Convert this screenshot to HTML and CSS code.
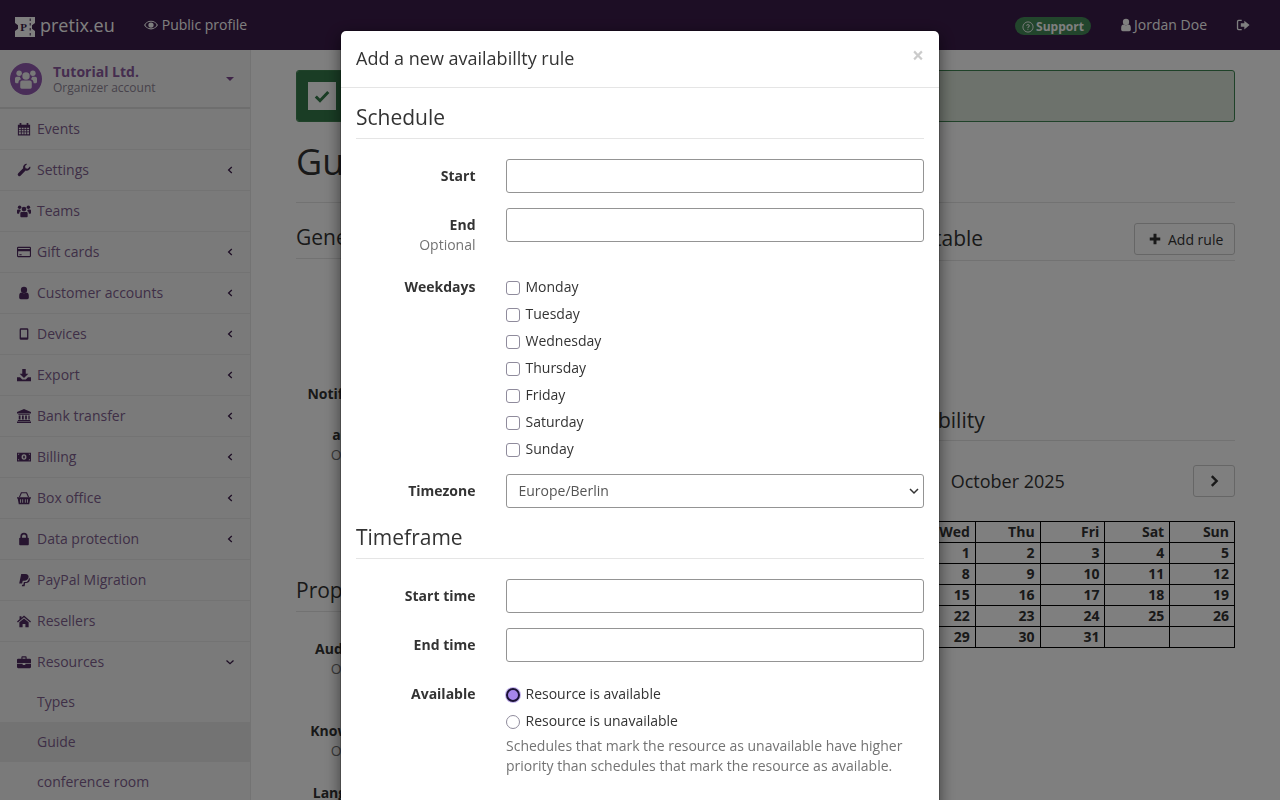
FILE: index.html
```html
<!DOCTYPE html>
<html lang="en">
<head>
<meta charset="utf-8">
<title>Guide :: Resources :: pretix.eu</title>
<link rel="stylesheet" href="styles.css">
</head>
<body>
<svg class="sprite" aria-hidden="true">
  <symbol id="i-calendar" viewBox="0 0 16 16"><path fill-rule="evenodd" d="M1 3h2V1h2v2h6V1h2v2h2v12.5H1zM2.2 6.5v1.7h2.2V6.5zM5.4 6.5v1.7h2.1V6.5zM8.5 6.5v1.7h2.1V6.5zM11.6 6.5v1.7h2.2V6.5zM2.2 9.1v1.8h2.2V9.1zM5.4 9.1v1.8h2.1V9.1zM8.5 9.1v1.8h2.1V9.1zM11.6 9.1v1.8h2.2V9.1zM2.2 11.8v2.2h2.2v-2.2zM5.4 11.8v2.2h2.1v-2.2zM8.5 11.8v2.2h2.1v-2.2zM11.6 11.8v2.2h2.2v-2.2z"/></symbol>
  <symbol id="i-wrench" viewBox="0 0 16 16"><path d="M15.4 4.6a4.2 4.2 0 0 1-5.6 4L4.3 14.400a2 2 0 0 1-2.9-2.800L7 6.100A4.200 4.200 0 0 1 11.600 1L9.200 3.500l.5 2.600 2.600.5 2.500-2.500z"/></symbol>
  <symbol id="i-group" viewBox="0 0 16 16"><circle cx="8" cy="5.800" r="2.700"/><circle cx="3" cy="3.800" r="2"/><circle cx="13" cy="3.800" r="2"/><path d="M3.800 10.500Q3.800 9 5.200 9h5.600q1.400 0 1.400 1.500V14q0 1-1 1H4.800q-1 0-1-1zM0 7.500Q0 6.300 1.300 6.300h2.200q.2 1 1 1.800-2 .4-2.100 2.900H.8Q0 11 0 10zM16 7.500q0-1.200-1.300-1.200h-2.200q-.2 1-1 1.800 2 .4 2.100 2.900h1.600q.8 0 .8-1z"/></symbol>
  <symbol id="i-card" viewBox="0 0 16 16"><path fill-rule="evenodd" d="M1.300 2h13.400Q16 2 16 3.300v9.400Q16 14 14.700 14H1.300Q0 14 0 12.700V3.300Q0 2 1.300 2zM1.300 7v5.700h13.400V7zM1.300 3.300v1.400h13.400V3.300zM2.700 10.500h2.600v1.100H2.700z"/></symbol>
  <symbol id="i-user" viewBox="0 0 16 16"><circle cx="8" cy="4.500" r="3.600"/><path d="M2.500 13.300V11c0-2.400 1.200-3.600 2.800-3.600 1.300 1 4.100 1 5.400 0 1.600 0 2.800 1.200 2.800 3.600v2.300q0 1.700-1.700 1.700H4.200q-1.700 0-1.700-1.700z"/></symbol>
  <symbol id="i-tablet" viewBox="0 0 16 16"><path fill-rule="evenodd" d="M4.500 1.500h7Q13 1.500 13 3v10q0 1.500-1.500 1.500h-7Q3 14.500 3 13V3q0-1.500 1.500-1.500zM4.500 3v9h7V3z"/></symbol>
  <symbol id="i-download" viewBox="0 0 16 16"><path d="M6 1h4v5.500h3L8 11.500 3 6.500h3zM0 10.500h3.500l2.500 2.500h4l2.500-2.500H16V15H0z"/></symbol>
  <symbol id="i-bank" viewBox="0 0 16 16"><path d="M8 0l8 3.500v1.500H0V3.500zM1.500 5.800h13v.9h-13zM2 7.400h2V12H2zM5.700 7.400h2V12h-2zM9.300 7.400h2V12h-2zM13 7.400h1.500V12H13zM1 12.600h14v1.200H1zM0 14.300h16V16H0z"/></symbol>
  <symbol id="i-money" viewBox="0 0 16 16"><path fill-rule="evenodd" d="M0 3h16v10H0zM1.300 4.300v1.500a2 2 0 0 0 1.500-1.500zM13.200 4.300a2 2 0 0 0 1.500 1.500V4.300zM1.300 10.200v1.500h1.500a2 2 0 0 0-1.500-1.500zM14.700 10.200a2 2 0 0 0-1.500 1.500h1.500zM8 4.800a2.800 3.200 0 1 0 0 6.400 2.800 3.200 0 0 0 0-6.400zM8 6.200a1 1.800 0 1 1 0 3.600 1 1.800 0 0 1 0-3.600z"/></symbol>
  <symbol id="i-basket" viewBox="0 0 16 16"><path fill-rule="evenodd" d="M0 7h16v1.600h-.8L14 15H2L.8 8.600H0zM3.600 9.500v4h1v-4zM6 9.500v4h1v-4zM9 9.500v4h1v-4zM11.400 9.500v4h1v-4z"/><path d="M2.800 7 5 2h6l2.200 5" fill="none" stroke="currentColor" stroke-width="1.300"/></symbol>
  <symbol id="i-lock" viewBox="0 0 16 16"><path d="M2.500 7.500Q2.500 6.500 3.500 6.500h9q1 0 1 1V14q0 1-1 1h-9q-1 0-1-1z"/><path d="M4.800 7V5a3.200 3.200 0 0 1 6.400 0v2" fill="none" stroke="currentColor" stroke-width="1.900"/></symbol>
  <symbol id="i-paypal" viewBox="0 0 16 16"><path d="M4.800 1h4.700c2.800 0 4.200 1.500 3.700 3.800-.5 2.600-2.400 4-5 4H6.600L5.800 12H2.500z"/><path d="M13.800 5.300c.9.700 1.100 1.700.8 3-.5 2.100-2 3.200-4.200 3.200H9.300L8.700 15H5.500l.3-1.700h1.400l.7-3h1.500c2.300 0 3.800-1.400 4.400-5z"/></symbol>
  <symbol id="i-home" viewBox="0 0 16 16"><path d="M8 1.800l8 6.700-1 1.100-7-5.800-7 5.800-1-1.100 2.900-2.400V2.500h2.200v1.900zM8 5l5.300 4.400V15H9.600v-3.500H6.400V15H2.700V9.400z"/></symbol>
  <symbol id="i-briefcase" viewBox="0 0 16 16"><path fill-rule="evenodd" d="M1.300 4.200H5V2.500q0-1 1-1h4q1 0 1 1v1.700h3.700Q16 4.200 16 5.500V9H0V5.500Q0 4.200 1.300 4.200zM6.300 2.800v1.400h3.400V2.800z"/><path d="M0 10h6.500v1.500h3V10H16v3.700q0 1.300-1.300 1.300H1.300Q0 15 0 13.700z"/></symbol>
  <symbol id="i-left" viewBox="0 0 10 10"><path d="M6.800 2 3.600 5l3.200 3" fill="none" stroke="currentColor" stroke-width="1.300"/></symbol>
  <symbol id="i-down" viewBox="0 0 10 10"><path d="M1.500 3.500 5 6.700l3.500-3.200" fill="none" stroke="currentColor" stroke-width="1.300"/></symbol>
  <symbol id="i-right" viewBox="0 0 16 16"><path d="M5.500 2.500 11 8l-5.500 5.500" fill="none" stroke="currentColor" stroke-width="2.800"/></symbol>
  <symbol id="i-check" viewBox="0 0 16 16"><path d="M1.800 8.500 6 12.700l8.300-8.700" fill="none" stroke="currentColor" stroke-width="3"/></symbol>
  <symbol id="i-plus" viewBox="0 0 16 16"><path d="M6.300 2h3.400v4.300H14v3.400H9.700V14H6.300V9.700H2V6.300h4.300z"/></symbol>
  <symbol id="i-eye" viewBox="0 0 16 16"><path fill-rule="evenodd" d="M8 3c3.500 0 6.300 2.200 8 5-1.700 2.800-4.500 5-8 5s-6.300-2.200-8-5c1.700-2.800 4.500-5 8-5zM8 4.300A6.800 6.800 0 0 0 1.500 8 6.800 6.800 0 0 0 8 11.700 6.800 6.800 0 0 0 14.500 8 6.800 6.800 0 0 0 8 4.300zM8 5a3 3 0 1 1 0 6 3 3 0 0 1 0-6z"/></symbol>
  <symbol id="i-logout" viewBox="0 0 16 16"><path fill-rule="evenodd" d="M3 2h3.500v1.500H3.200q-.7 0-.7.700v7.600q0 .7.700.7h3.300V14H3q-2 0-2-2V4q0-2 2-2z"/><path d="M9.500 3 15.500 8l-6 5v-3H5.500V6h4z"/></symbol>
  <symbol id="i-help" viewBox="0 0 16 16"><circle cx="8" cy="8" r="6.800" fill="none" stroke="currentColor" stroke-width="1.200"/><path d="M5.600 6.300C5.700 4.900 6.700 4.200 8 4.200c1.400 0 2.400.8 2.400 2 0 1.900-1.900 1.700-1.900 3.200H7.200c0-2.200 1.800-2 1.800-3.200 0-.5-.4-.8-1-.8s-1 .4-1.100.9zM7.200 10.200h1.300v1.400H7.200z"/></symbol>
  <symbol id="i-select" viewBox="0 0 10 10"><path d="M1 3l4 4 4-4" fill="none" stroke="currentColor" stroke-width="1.500"/></symbol>
</svg>

<header class="topbar">
  <a class="brand">
    <svg class="logo" viewBox="0 0 20 20" aria-hidden="true">
      <path d="M0 0h20v6l-3 2.200v3.600l3 2.200v6H0v-6l3-2.200V8.200L0 6z" fill="currentColor"/>
      <path d="M15.200 1.500v2.500M15.200 6v2.500M15.200 11v2.500M15.200 16v2.500" class="logo-perf"/>
      <text x="8.500" y="14" class="logo-text">P</text>
    </svg>
    <span class="brand-name">pretix.eu</span>
  </a>
  <a class="top-link"><svg class="ico ico-eye"><use href="#i-eye"/></svg>Public profile</a>
  <div class="top-right">
    <a class="support"><svg class="ico ico-help"><use href="#i-help"/></svg>Support</a>
    <a class="top-link user"><svg class="ico ico-user"><use href="#i-user"/></svg>Jordan Doe</a>
    <a class="logout"><svg class="ico ico-logout"><use href="#i-logout"/></svg></a>
  </div>
</header>

<div class="page">
  <aside class="sidebar">
    <div class="org">
      <span class="avatar"><svg class="ico ico-avatar"><use href="#i-group"/></svg></span>
      <div class="org-text">
        <div class="org-name">Tutorial Ltd.</div>
        <div class="org-type">Organizer account</div>
      </div>
      <span class="caret"></span>
    </div>
    <nav>
      <a class="item"><svg class="ico"><use href="#i-calendar"/></svg><span class="label">Events</span></a>
      <a class="item"><svg class="ico"><use href="#i-wrench"/></svg><span class="label">Settings</span><svg class="chev"><use href="#i-left"/></svg></a>
      <a class="item"><svg class="ico"><use href="#i-group"/></svg><span class="label">Teams</span></a>
      <a class="item"><svg class="ico"><use href="#i-card"/></svg><span class="label">Gift cards</span><svg class="chev"><use href="#i-left"/></svg></a>
      <a class="item"><svg class="ico"><use href="#i-user"/></svg><span class="label">Customer accounts</span><svg class="chev"><use href="#i-left"/></svg></a>
      <a class="item"><svg class="ico"><use href="#i-tablet"/></svg><span class="label">Devices</span><svg class="chev"><use href="#i-left"/></svg></a>
      <a class="item"><svg class="ico"><use href="#i-download"/></svg><span class="label">Export</span><svg class="chev"><use href="#i-left"/></svg></a>
      <a class="item"><svg class="ico"><use href="#i-bank"/></svg><span class="label">Bank transfer</span><svg class="chev"><use href="#i-left"/></svg></a>
      <a class="item"><svg class="ico"><use href="#i-money"/></svg><span class="label">Billing</span><svg class="chev"><use href="#i-left"/></svg></a>
      <a class="item"><svg class="ico"><use href="#i-basket"/></svg><span class="label">Box office</span><svg class="chev"><use href="#i-left"/></svg></a>
      <a class="item"><svg class="ico"><use href="#i-lock"/></svg><span class="label">Data protection</span><svg class="chev"><use href="#i-left"/></svg></a>
      <a class="item"><svg class="ico"><use href="#i-paypal"/></svg><span class="label">PayPal Migration</span></a>
      <a class="item"><svg class="ico"><use href="#i-home"/></svg><span class="label">Resellers</span></a>
      <a class="item item-open"><svg class="ico"><use href="#i-briefcase"/></svg><span class="label">Resources</span><svg class="chev"><use href="#i-down"/></svg></a>
      <a class="sub">Types</a>
      <a class="sub sub-active">Guide</a>
      <a class="sub">conference room</a>
    </nav>
  </aside>

  <main class="content">
    <div class="alert">
      <span class="alert-side"><span class="alert-box"><svg class="ico ico-check"><use href="#i-check"/></svg></span></span>
      <span class="alert-msg"></span>
    </div>
    <h1 class="title">Guide</h1>
    <div class="columns">
      <section class="col">
        <h2 class="legend legend-general">General information</h2>
        <div class="field field-notif"><div class="name">Notified via</div></div>
        <div class="field field-address"><div class="name">address</div><div class="opt">Optional</div></div>
        <h2 class="legend legend-prop">Properties</h2>
        <div class="field field-aud"><div class="name">Audiences</div><div class="opt">Optional</div></div>
        <div class="field field-know"><div class="name">Knowledge</div><div class="opt">Optional</div></div>
        <div class="field field-lang"><div class="name">Languages</div></div>
      </section>
      <section class="col">
        <div class="legend legend-row">
          <h2 class="legend-text">Schedules timetable</h2>
          <a class="btn btn-add"><svg class="ico ico-plus"><use href="#i-plus"/></svg>Add rule</a>
        </div>
        <h2 class="legend legend-avail">Upcoming availability</h2>
        <div class="month">
          <a class="btn btn-nav"><svg class="ico ico-nav"><use href="#i-left"/></svg></a>
          <span class="month-name">October 2025</span>
          <a class="btn btn-nav"><svg class="ico ico-nav"><use href="#i-right"/></svg></a>
        </div>
        <table class="cal">
          <tr><th>Mon</th><th>Tue</th><th>Wed</th><th>Thu</th><th>Fri</th><th>Sat</th><th>Sun</th></tr>
          <tr><td></td><td></td><td>1</td><td>2</td><td>3</td><td>4</td><td>5</td></tr>
          <tr><td>6</td><td>7</td><td>8</td><td>9</td><td>10</td><td>11</td><td>12</td></tr>
          <tr><td>13</td><td>14</td><td>15</td><td>16</td><td>17</td><td>18</td><td>19</td></tr>
          <tr><td>20</td><td>21</td><td>22</td><td>23</td><td>24</td><td>25</td><td>26</td></tr>
          <tr><td>27</td><td>28</td><td>29</td><td>30</td><td>31</td><td></td><td></td></tr>
        </table>
      </section>
    </div>
  </main>
</div>

<div class="backdrop"></div>

<div class="modal">
  <div class="modal-head">
    <h4 class="modal-title">Add a new availabillty rule</h4>
    <button class="close" type="button">×</button>
  </div>
  <form class="modal-body">
    <div class="section-title">Schedule</div>
    <div class="row">
      <label class="row-label">Start</label>
      <div class="row-ctl"><input class="input" type="text"></div>
    </div>
    <div class="row">
      <label class="row-label">End<span class="optional">Optional</span></label>
      <div class="row-ctl"><input class="input" type="text"></div>
    </div>
    <div class="row">
      <label class="row-label">Weekdays</label>
      <div class="row-ctl checks">
        <label class="check"><input class="cb" type="checkbox">Monday</label>
        <label class="check"><input class="cb" type="checkbox">Tuesday</label>
        <label class="check"><input class="cb" type="checkbox">Wednesday</label>
        <label class="check"><input class="cb" type="checkbox">Thursday</label>
        <label class="check"><input class="cb" type="checkbox">Friday</label>
        <label class="check"><input class="cb" type="checkbox">Saturday</label>
        <label class="check check-last"><input class="cb" type="checkbox">Sunday</label>
      </div>
    </div>
    <div class="row">
      <label class="row-label">Timezone</label>
      <div class="row-ctl select-wrap">
        <select class="input select"><option>Europe/Berlin</option></select>
        <svg class="select-arrow"><use href="#i-select"/></svg>
      </div>
    </div>
    <div class="section-title">Timeframe</div>
    <div class="row">
      <label class="row-label">Start time</label>
      <div class="row-ctl"><input class="input" type="text"></div>
    </div>
    <div class="row">
      <label class="row-label">End time</label>
      <div class="row-ctl"><input class="input" type="text"></div>
    </div>
    <div class="row">
      <label class="row-label">Available</label>
      <div class="row-ctl checks">
        <label class="check"><input class="rb" type="radio" name="av" checked>Resource is available</label>
        <label class="check"><input class="rb" type="radio" name="av">Resource is unavailable</label>
        <div class="help">Schedules that mark the resource as unavailable have higher priority than schedules that mark the resource as available.</div>
      </div>
    </div>
  </form>
</div>
</body>
</html>
```

FILE: styles.css
```css
* { box-sizing: border-box; }
html, body { height: 800px; overflow: hidden; }
body {
  margin: 0;
  font-family: "Open Sans", "Liberation Sans", sans-serif;
  font-size: 14px;
  line-height: 20px;
  color: #333;
  background: #fff;
}
.sprite { display: none; }
.ico { width: 14px; height: 14px; fill: currentColor; flex: none; }

.topbar {
  height: 50px;
  background: #3b1c4a;
  color: #fff;
  display: flex;
  align-items: center;
}
.brand { display: flex; align-items: center; margin-left: 15px; }
.logo { width: 20px; height: 20px; margin-top: 4px; color: #fff; }
.logo-perf { stroke: #3b1c4a; stroke-width: 1; fill: none; }
.logo-text { font-family: "Liberation Serif", serif; font-size: 11px; font-weight: bold; text-anchor: middle; fill: #3b1c4a; }
.brand-name { font-size: 18px; margin-left: 5px; }
.top-link { display: flex; align-items: center; margin-left: 29px; }
.ico-eye { width: 14px; height: 14px; margin-right: 4px; }
.top-right { margin-left: auto; display: flex; align-items: center; }
.support {
  display: flex;
  align-items: center;
  height: 18px;
  width: 76px;
  padding: 1px 0 0 7px;
  border-radius: 9px;
  background: #448a58;
  font-size: 12px;
  font-weight: 700;
  margin-top: 2px;
}
.ico-help { width: 12px; height: 12px; margin-right: 2px; }
.user { margin-left: 32px; }
.ico-user { width: 14px; height: 14px; margin-right: 1.300px; margin-left: -4.300px; }
.logout { display: flex; margin-left: 29px; margin-right: 30px; }
.ico-logout { width: 14px; height: 14px; }

.page { display: flex; height: 750px; }
.sidebar {
  width: 251px;
  flex: none;
  background: #f5f5f5;
  border-right: 1px solid #e7e7e7;
  color: #7e5f8e;
}
.org {
  height: 59px;
  display: flex;
  align-items: center;
  padding: 0 16px 2px 10px;
  border-bottom: 2px solid #dcdcdc;
}
.avatar {
  width: 32px;
  height: 32px;
  border-radius: 50%;
  background: #925ab0;
  color: #f0f0f0;
  display: flex;
  align-items: center;
  justify-content: center;
  flex: none;
  margin-top: 2px;
}
.ico-avatar { width: 22px; height: 22px; }
.org-text { margin: 2px 0 0 11px; flex: 1; }
.org-name { font-weight: 700; line-height: 18px; color: #8a5a9e; }
.org-type { font-size: 12px; line-height: 14px; color: #8f8596; }
.caret {
  width: 0;
  height: 0;
  border-left: 4px solid transparent;
  border-right: 4px solid transparent;
  border-top: 4px solid #7f4a91;
  margin-top: 2px;
}
.item {
  height: 41px;
  display: flex;
  align-items: center;
  padding: 0 15px 1px 17px;
  border-bottom: 1px solid #e7e7e7;
}
.item .ico { color: #4f2a60; }
.label { margin-left: 6px; flex: 1; }
.chev { width: 10px; height: 10px; color: #3b1c4a; flex: none; }
.item-open { height: 40px; border-bottom: 0; }
.sub { display: block; height: 40px; padding: 10px 0 10px 37px; }
.sub-active { background: #e7e7e7; }

.content { flex: 1; padding: 20px 45px 0; min-width: 0; }
.alert {
  display: flex;
  height: 52px;
  border-radius: 3px;
  border: 1px solid #3f8552;
  background: #dbe5d8;
  overflow: hidden;
}
.alert-side {
  width: 52px;
  margin: -1px 0 -1px -1px;
  background: #347a4a;
  display: flex;
  align-items: center;
  justify-content: center;
}
.alert-box {
  width: 28px;
  height: 28px;
  background: #fff;
  color: #347a4a;
  display: flex;
  align-items: center;
  justify-content: center;
}
.ico-check { width: 16px; height: 16px; }
.title {
  font-size: 36px;
  font-weight: 400;
  line-height: 50px;
  margin: 15px 0 0;
  padding-bottom: 15px;
  border-bottom: 1px solid #e5e5e5;
}
.columns { display: flex; gap: 30px; }
.col { flex: 1 1 0; min-width: 0; }
.legend {
  font-size: 21px;
  font-weight: 400;
  line-height: 29px;
  margin: 0;
  padding-bottom: 6px;
  border-bottom: 1px solid #e5e5e5;
}
.legend-general { margin-top: 20px; }
.legend-prop { margin-top: 111px; }
.legend-row {
  display: flex;
  align-items: center;
  justify-content: space-between;
  margin-top: 20px;
  padding-bottom: 5px;
}
.legend-text { font-size: 21px; font-weight: 400; line-height: 29px; margin: -2px 0 0; word-spacing: 5px; }
.legend-avail { margin-top: 144px; line-height: 30px; padding-bottom: 5px; word-spacing: -4px; }
.field { width: 91px; text-align: right; }
.name { font-weight: 700; white-space: nowrap; }
.opt { color: #737373; }
.field-notif { margin-top: 125px; word-spacing: -2px; }
.field-address { margin-top: 21px; }
.field-aud { margin-top: 27px; }
.field-know { margin-top: 42px; }
.field-lang { margin-top: 22px; }
.btn {
  display: inline-flex;
  align-items: center;
  justify-content: center;
  height: 32px;
  border: 1px solid #ccc;
  border-radius: 3px;
  background: #fff;
  font-size: 14px;
  white-space: nowrap;
}
.btn-add { width: 101px; justify-content: flex-start; padding-left: 13px; }
.ico-plus { width: 14px; height: 14px; margin-right: 6px; }
.btn-nav { width: 42px; }
.ico-nav { width: 14px; height: 14px; margin-left: -1px; }
.month {
  display: flex;
  align-items: center;
  justify-content: space-between;
  margin-top: 24px;
}
.month-name { font-size: 18px; }
.cal {
  width: 100%;
  margin-top: 24px;
  border-collapse: collapse;
  table-layout: fixed;
  font-weight: 700;
}
.cal th, .cal td {
  border: 1px solid #000;
  height: 21px;
  padding: 0 5px;
  text-align: right;
  line-height: 20px;
}

.backdrop {
  position: fixed;
  inset: 0;
  background: rgba(0, 0, 0, .5);
}
.modal {
  position: fixed;
  top: 30px;
  left: 340px;
  width: 600px;
  background: #fff;
  border: 1px solid rgba(0, 0, 0, .2);
  border-radius: 6px;
  background-clip: padding-box;
  box-shadow: 0 5px 15px rgba(0, 0, 0, .5);
}
.modal-head {
  position: relative;
  height: 57px;
  padding: 15px;
  border-bottom: 1px solid #e5e5e5;
}
.modal-title { margin: 0; font-size: 18px; font-weight: 400; line-height: 25px; }
.close {
  position: absolute;
  top: 14px;
  right: 15px;
  padding: 0;
  border: 0;
  background: none;
  font: 700 21px/21px "Open Sans", sans-serif;
  color: #000;
  opacity: .2;
}
.modal-body { padding: 15px; height: 900px; }
.section-title {
  font-size: 21px;
  line-height: 29px;
  padding-bottom: 6px;
  border-bottom: 1px solid #e5e5e5;
  margin-bottom: 20px;
  margin-top: 15px;
}
.section-title:first-child { margin-top: 0; }
.row { display: flex; gap: 30.500px; margin-bottom: 15px; }
.row-label {
  width: 119.500px;
  flex: none;
  padding-top: 7px;
  text-align: right;
  font-weight: 700;
}
.optional { display: block; font-weight: 400; color: #737373; }
.row-ctl { flex: 1; min-width: 0; }
.input {
  display: block;
  width: 100%;
  height: 34px;
  padding: 6px 12px;
  border: 1px solid #949494;
  border-radius: 3px;
  background: #fff;
  font: inherit;
  color: #555;
}
.select-wrap { position: relative; }
.select { appearance: none; padding-left: 11.500px; }
.select-arrow {
  position: absolute;
  right: 5px;
  top: 12px;
  width: 10px;
  height: 10px;
  color: #333;
  pointer-events: none;
}
.checks { padding-top: 7px; }
.check { display: flex; align-items: center; height: 20px; margin-bottom: 7px; }
.check-last { margin-bottom: 0; }
.cb, .rb {
  appearance: none;
  width: 14px;
  height: 14px;
  margin: 1px 5.500px 0 0;
  border: 1px solid #8f8b9c;
  background: #fff;
  flex: none;
}
.cb { border-radius: 3px; }
.rb { border-radius: 50%; }
.rb:checked {
  border: 2px solid #1b1235;
  background: #a585ea;
  box-shadow: 0 0 0 1px #c4b4ee;
}
.help { margin-top: -2px; color: #737373; }
```
